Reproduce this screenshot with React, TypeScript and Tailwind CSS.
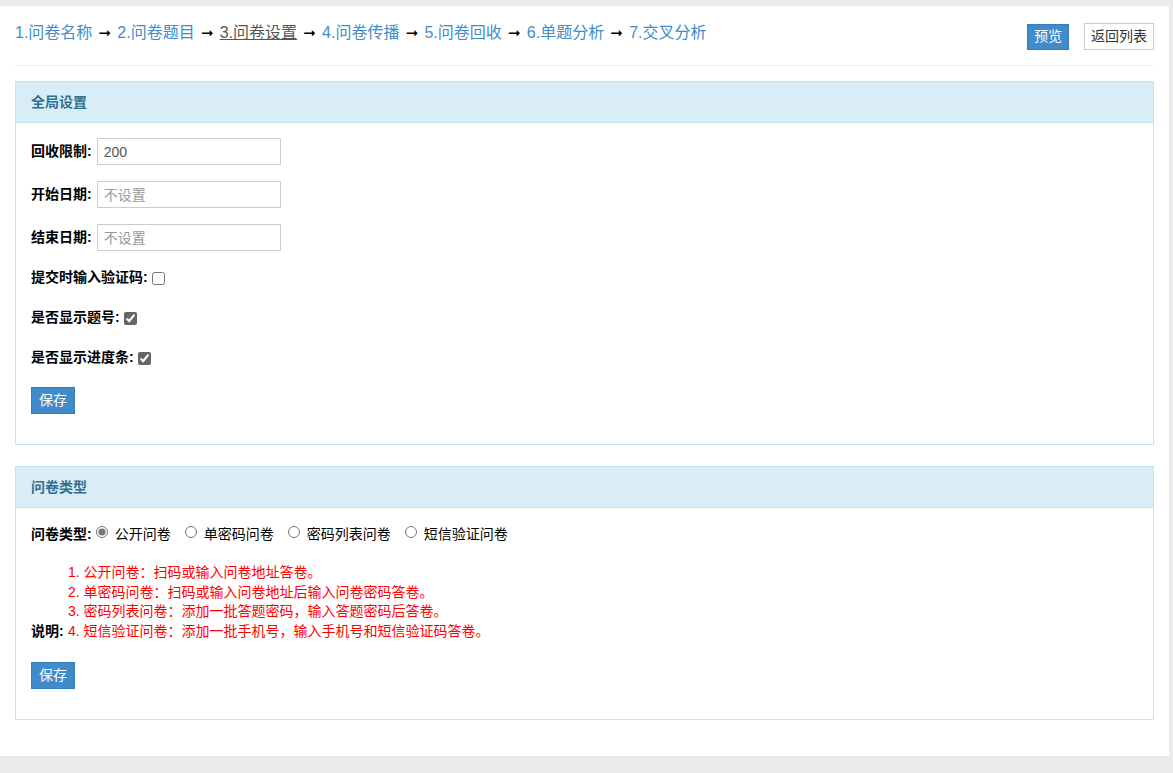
import { useState } from "react";

const steps = [
  "1.问卷名称",
  "2.问卷题目",
  "3.问卷设置",
  "4.问卷传播",
  "5.问卷回收",
  "6.单题分析",
  "7.交叉分析",
];

const font = { fontFamily: '"Liberation Sans", "Noto Sans CJK SC", sans-serif' };

function Panel({ title, children }: { title: string; children: React.ReactNode }) {
  return (
    <div className="border border-[#bce8f1] bg-white">
      <div className="h-[41px] flex items-center px-[15px] bg-[#d9edf7] border-b border-[#bce8f1] text-[14px] font-bold text-[#31708f]">
        {title}
      </div>
      <div className="px-[15px] pt-[15px] pb-[30px]">{children}</div>
    </div>
  );
}

export default function App() {
  const [limit, setLimit] = useState("200");
  const [captcha, setCaptcha] = useState(false);
  const [showNo, setShowNo] = useState(true);
  const [showProgress, setShowProgress] = useState(true);
  const [type, setType] = useState("public");

  const types = [
    { id: "public", label: "公开问卷" },
    { id: "single", label: "单密码问卷" },
    { id: "list", label: "密码列表问卷" },
    { id: "sms", label: "短信验证问卷" },
  ];

  const notes = [
    "1. 公开问卷：扫码或输入问卷地址答卷。",
    "2. 单密码问卷：扫码或输入问卷地址后输入问卷密码答卷。",
    "3. 密码列表问卷：添加一批答题密码，输入答题密码后答卷。",
    "4. 短信验证问卷：添加一批手机号，输入手机号和短信验证码答卷。",
  ];

  return (
    <div className="min-h-[773px] bg-[#ebebeb] pt-[6px] pb-[16px] pr-[4px] text-[14px] text-[#333]" style={font}>
      <div className="bg-white px-[15px] pb-[36px]">
        {/* Header */}
        <div className="flex items-start justify-between pt-[16px] pb-[15px] border-b border-[#eee]">
          <div className="flex items-center text-[16px] leading-[20px] pt-[1px]">
            {steps.map((s, i) => (
              <span key={s} className="flex items-center">
                {i > 0 && (
                  <span
                    className="w-[25px] text-center text-black font-bold"
                    style={{ fontFamily: '"DejaVu Sans", sans-serif', fontSize: 15 }}
                  >
                    ➞
                  </span>
                )}
                <span className={i === 2 ? "text-[#555] underline" : "text-[#428bca]"}>{s}</span>
              </span>
            ))}
          </div>
          <div className="flex items-center gap-[15px] pt-[1px]">
            <button className="h-[26px] px-[6px] bg-[#428bca] text-white text-[14px] border border-[#357ebd]">预览</button>
            <button className="h-[27px] px-[6px] bg-white text-[#333] text-[14px] border border-[#ccc]">返回列表</button>
          </div>
        </div>

        <div className="mt-[15px] flex flex-col gap-[21px]">
          <Panel title="全局设置">
            <div className="flex flex-col">
              {[
                { label: "回收限制:", value: limit, ph: "", set: setLimit },
                { label: "开始日期:", value: "", ph: "不设置", set: () => {} },
                { label: "结束日期:", value: "", ph: "不设置", set: () => {} },
              ].map((r) => (
                <div key={r.label} className="flex items-center h-[27px] mb-[16px]">
                  <span className="font-bold text-black mr-[5px]">{r.label}</span>
                  <input
                    className="w-[184px] h-[27px] border border-[#ccc] px-[6px] text-[14px] text-[#555] placeholder:text-[#999] outline-none"
                    value={r.value}
                    placeholder={r.ph}
                    onChange={(e) => r.set(e.target.value)}
                  />
                </div>
              ))}
              {[
                { label: "提交时输入验证码:", v: captcha, set: setCaptcha },
                { label: "是否显示题号:", v: showNo, set: setShowNo },
                { label: "是否显示进度条:", v: showProgress, set: setShowProgress },
              ].map((c) => (
                <div key={c.label} className="flex items-center h-[20px] mb-[20px] first:mt-[-1px]">
                  <span className="font-bold text-black mr-[4px]">{c.label}</span>
                  <input
                    type="checkbox"
                    checked={c.v}
                    onChange={(e) => c.set(e.target.checked)}
                    className="w-[13px] h-[13px] mt-[3px] accent-[#666]"
                  />
                </div>
              ))}
              <div>
                <button className="h-[27px] px-[7px] bg-[#428bca] text-white text-[14px] border border-[#357ebd]">保存</button>
              </div>
            </div>
          </Panel>

          <Panel title="问卷类型">
            <div className="flex items-center h-[22px]">
              <span className="font-bold text-black mr-[4px]">问卷类型:</span>
              {types.map((t) => (
                <label key={t.id} className="flex items-center mr-[14px]">
                  <input
                    type="radio"
                    name="qtype"
                    checked={type === t.id}
                    onChange={() => setType(t.id)}
                    className="w-[12px] h-[12px] mr-[7px] mb-[4px] accent-[#777]"
                  />
                  <span className="text-black">{t.label}</span>
                </label>
              ))}
            </div>
            <div className="flex items-end mt-[18px] mb-[21px]">
              <span className="w-[37px] shrink-0 font-bold text-black leading-[19.5px]">说明:</span>
              <div className="text-[#f00] text-[14px] leading-[19.5px]">
                {notes.map((n) => (
                  <div key={n}>{n}</div>
                ))}
              </div>
            </div>
            <div>
              <button className="h-[27px] px-[7px] bg-[#428bca] text-white text-[14px] border border-[#357ebd]">保存</button>
            </div>
          </Panel>
        </div>
      </div>
    </div>
  );
}
